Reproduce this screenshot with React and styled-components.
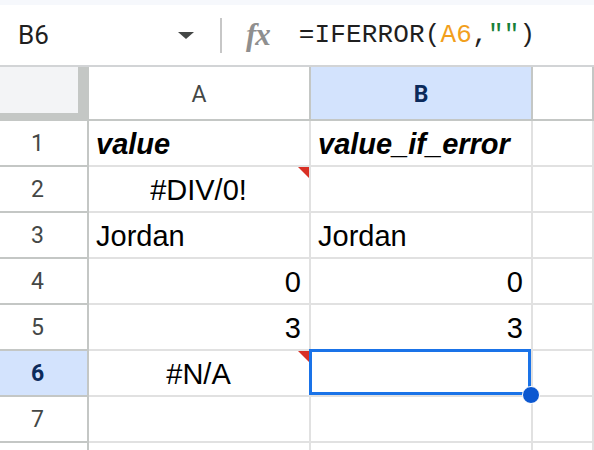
import styled, { createGlobalStyle } from 'styled-components';

const Global = createGlobalStyle`
  html, body {
    margin: 0;
    padding: 0;
    background: #fff;
    overflow: hidden;
  }
`;

const Page = styled.div`
  width: 594px;
  height: 450px;
  overflow: hidden;
  background: #fff;
`;

const TopStrip = styled.div`
  height: 5px;
  background: #f6f8fc;
`;

const FormulaBar = styled.div`
  display: flex;
  align-items: center;
  height: 60px;
  border-bottom: 2px solid #d2d4d6;
`;

const NameBox = styled.div`
  display: flex;
  align-items: center;
  justify-content: space-between;
  width: 176px;
  padding-left: 18px;
  font-family: Roboto, 'Liberation Sans', sans-serif;
  font-size: 26px;
  color: #1f1f1f;
`;

const Caret = styled.span`
  width: 0;
  height: 0;
  border-left: 8px solid transparent;
  border-right: 8px solid transparent;
  border-top: 7px solid #444746;
`;

const Divider = styled.span`
  width: 2px;
  height: 35px;
  margin: 0 24px 0 26px;
  background: #c7c7c7;
`;

const Fx = styled.span`
  font-family: 'Liberation Serif', serif;
  font-style: italic;
  font-weight: 700;
  font-size: 31px;
  color: #8f8f8f;
  letter-spacing: -1px;
  margin-right: 29px;
`;

const Formula = styled.div`
  font-family: 'Liberation Mono', monospace;
  font-size: 26px;
  letter-spacing: 0.15px;
  color: #1f1f1f;
`;

const Token = styled.span`
  color: ${p => p.$color};
`;

const Grid = styled.div`
  display: grid;
  grid-template-columns: 89px 222px 222px 1fr;
  grid-template-rows: 54px repeat(8, 46px);
`;

const Corner = styled.div`
  background: #c4c7c5;
  padding: 0 9px 8px 0;
  border-right: 2px solid #c4c7c5;
`;

const CornerInner = styled.div`
  height: 100%;
  background: #f3f4f6;
`;

const ColHead = styled.div`
  display: flex;
  align-items: center;
  justify-content: center;
  border-right: 2px solid #c4c7c5;
  border-bottom: 2px solid #c4c7c5;
  background: ${p => (p.$active ? '#d3e3fd' : '#fff')};
  color: ${p => (p.$active ? '#0b2a5b' : '#444746')};
  font-family: Roboto, 'Liberation Sans', sans-serif;
  font-weight: ${p => (p.$active ? 700 : 400)};
  font-size: 23px;
  padding-top: 2px;
`;

const RowHead = styled.div`
  display: flex;
  align-items: center;
  justify-content: center;
  padding-right: 12px;
  border-right: 2px solid #c4c7c5;
  border-bottom: 2px solid #c4c7c5;
  background: ${p => (p.$active ? '#d3e3fd' : '#fff')};
  color: ${p => (p.$active ? '#0b2a5b' : '#444746')};
  font-family: Roboto, 'Liberation Sans', sans-serif;
  font-weight: ${p => (p.$active ? 700 : 400)};
  font-size: 23px;
`;

const Cell = styled.div`
  position: relative;
  display: flex;
  align-items: flex-end;
  justify-content: ${p => p.$align || 'flex-start'};
  padding: 0 8px 5px 7px;
  border-right: 2px solid #e1e1e1;
  border-bottom: 2px solid #e1e1e1;
  font-family: 'Liberation Sans', Arial, sans-serif;
  font-size: 29px;
  line-height: 32px;
  color: #000;
  font-weight: ${p => (p.$bold ? 700 : 400)};
  font-style: ${p => (p.$bold ? 'italic' : 'normal')};
  white-space: nowrap;
`;

const ErrorMark = styled.span`
  position: absolute;
  top: 0;
  right: 0;
  width: 0;
  height: 0;
  border-left: 11px solid transparent;
  border-top: 11px solid #d93025;
`;

const Selection = styled.span`
  position: absolute;
  inset: -2px 0 0 -2px;
  border: 3px solid #1a73e8;
  pointer-events: none;
`;

const Handle = styled.span`
  position: absolute;
  right: -9px;
  bottom: -9px;
  width: 16px;
  height: 16px;
  border-radius: 50%;
  background: #0b57d0;
  border: 1px solid #fff;
  z-index: 2;
`;

const rows = [
  { n: 1, a: { t: 'value', bold: true }, b: { t: 'value_if_error', bold: true } },
  { n: 2, a: { t: '#DIV/0!', align: 'center', err: true }, b: { t: '' } },
  { n: 3, a: { t: 'Jordan' }, b: { t: 'Jordan' } },
  { n: 4, a: { t: '0', align: 'flex-end' }, b: { t: '0', align: 'flex-end' } },
  { n: 5, a: { t: '3', align: 'flex-end' }, b: { t: '3', align: 'flex-end' } },
  { n: 6, a: { t: '#N/A', align: 'center', err: true }, b: { t: '', sel: true }, active: true },
  { n: 7, a: { t: '' }, b: { t: '' } },
  { n: '', a: { t: '' }, b: { t: '' } },
];

const renderCell = (c, key) => (
  <Cell key={key} $align={c.align} $bold={c.bold}>
    {c.t}
    {c.err && <ErrorMark />}
    {c.sel && (
      <>
        <Selection />
        <Handle />
      </>
    )}
  </Cell>
);

const App = () => {
  return (
    <Page>
      <Global />
      <TopStrip />
      <FormulaBar>
        <NameBox>
          B6
          <Caret />
        </NameBox>
        <Divider />
        <Fx>fx</Fx>
        <Formula>
          =IFERROR(<Token $color="#f29f1c">A6</Token>,<Token $color="#188038">""</Token>)
        </Formula>
      </FormulaBar>
      <Grid>
        <Corner>
          <CornerInner />
        </Corner>
        <ColHead>A</ColHead>
        <ColHead $active>B</ColHead>
        <ColHead />
        {rows.map((r, i) => [
          <RowHead key={`h${i}`} $active={r.active}>{r.n}</RowHead>,
          renderCell(r.a, `a${i}`),
          renderCell(r.b, `b${i}`),
          <Cell key={`c${i}`} />,
        ])}
      </Grid>
    </Page>
  );
};

export default App;
